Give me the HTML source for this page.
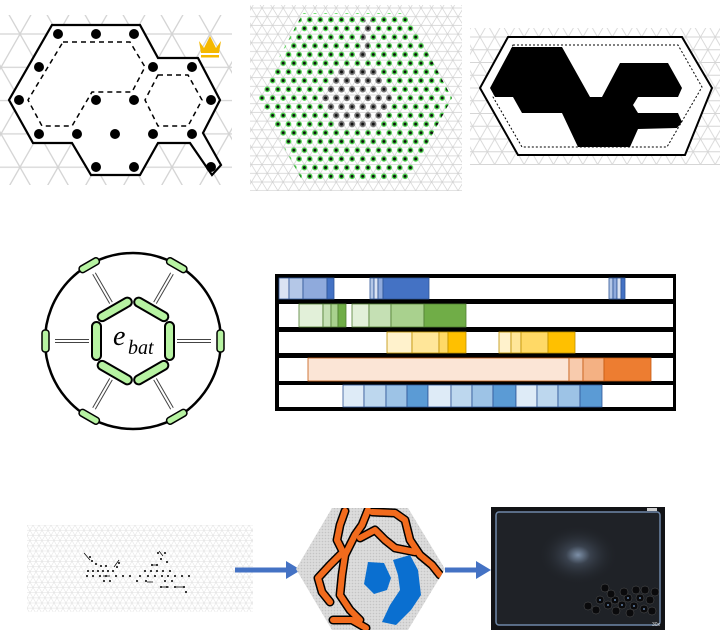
<!DOCTYPE html>
<html><head><meta charset="utf-8"><style>
html,body{margin:0;padding:0;background:#fff;width:720px;height:638px;overflow:hidden}
svg{display:block}
</style></head><body>
<svg width="720" height="638" viewBox="0 0 720 638" xmlns="http://www.w3.org/2000/svg">
<defs>
<pattern id="g1" width="38" height="66.6" patternUnits="userSpaceOnUse" patternTransform="translate(20,34)">
<path d="M0,0H38M0,33.3H38M0,66.6H38M0,0L38,66.6M38,0L0,66.6" stroke="#d4d4d4" stroke-width="1.3" fill="none"/></pattern>
<pattern id="g2" width="10.6" height="17.4" patternUnits="userSpaceOnUse" patternTransform="translate(262,8)">
<path d="M0,0H10.6M0,8.7H10.6M0,17.4H10.6M0,0L10.6,17.4M10.6,0L0,17.4" stroke="#d0d0d0" stroke-width="0.7" fill="none"/></pattern>
<pattern id="g3" width="14.7" height="25.5" patternUnits="userSpaceOnUse" patternTransform="translate(480,37)">
<path d="M0,0H14.7M0,12.75H14.7M0,25.5H14.7M0,0L14.7,25.5M14.7,0L0,25.5" stroke="#d6d6d6" stroke-width="0.9" fill="none"/></pattern>
<pattern id="g4" width="6" height="10.4" patternUnits="userSpaceOnUse" patternTransform="translate(27,525)">
<path d="M0,0H6M0,5.2H6M0,10.4H6M0,0L6,10.4M6,0L0,10.4" stroke="#e0e0e0" stroke-width="0.5" fill="none"/></pattern>
<pattern id="dg" width="10.6" height="17.4" patternUnits="userSpaceOnUse" patternTransform="translate(262,98)">
<g id="gd"><circle cx="0" cy="0" r="2.8" fill="#4cd44c"/><circle cx="0" cy="0" r="1.5" fill="#111"/></g>
<use href="#gd" x="5.3" y="8.7"/><use href="#gd" x="10.6" y="0"/><use href="#gd" x="0" y="17.4"/><use href="#gd" x="10.6" y="17.4"/>
</pattern>
<pattern id="dk" width="10.6" height="17.4" patternUnits="userSpaceOnUse" patternTransform="translate(262,98)">
<g id="kd"><circle cx="0" cy="0" r="3.2" fill="#777"/><circle cx="0" cy="0" r="1.5" fill="#111"/></g>
<use href="#kd" x="5.3" y="8.7"/><use href="#kd" x="10.6" y="0"/><use href="#kd" x="0" y="17.4"/><use href="#kd" x="10.6" y="17.4"/>
</pattern>
<pattern id="hx" width="3" height="3" patternUnits="userSpaceOnUse">
<rect width="3" height="3" fill="#dcdcdc"/><circle cx="1.5" cy="1.5" r="0.8" fill="#c4c4c4"/></pattern>
<clipPath id="hex2"><polygon points="303,13 407,13 452,98 407,182 303,182 257,98"/></clipPath>
<clipPath id="hexo"><polygon points="332,508 408,508 445,569 408,630 332,630 296,569"/></clipPath>
<radialGradient id="spot" cx="0.5" cy="0.5" r="0.5"><stop offset="0" stop-color="#7d90a8"/><stop offset="0.3" stop-color="#3a424e"/><stop offset="1" stop-color="#1f2227" stop-opacity="0"/></radialGradient>
</defs>

<!-- Panel 1 -->
<rect x="0" y="15" width="232" height="170" fill="url(#g1)"/>
<path d="M52,25L140,25L158,58L198,58L220,100L203,133L221,165L212,175L190,143L158,143L140,175L91,175L72,143L33,143L9,100Z" fill="#fff" stroke="#000" stroke-width="2.2"/>
<g stroke="#000" stroke-width="1.5" stroke-dasharray="5,4" fill="none">
<path d="M63,42L130,42L145,67L132,92L92,92L72,126L42,126L28,100L63,42"/>
<path d="M158,75L188,75L202,100L188,126L158,126L145,100Z"/>
</g>
<g fill="#000">
<circle cx="58" cy="34" r="5"/><circle cx="96" cy="34" r="5"/><circle cx="134" cy="34" r="5"/>
<circle cx="39" cy="67" r="5"/><circle cx="153" cy="67" r="5"/><circle cx="192" cy="67" r="5"/>
<circle cx="19" cy="100" r="5"/><circle cx="96" cy="100" r="5"/><circle cx="134" cy="100" r="5"/><circle cx="211" cy="100" r="5"/>
<circle cx="39" cy="134" r="5"/><circle cx="77" cy="134" r="5"/><circle cx="115" cy="134" r="5"/><circle cx="153" cy="134" r="5"/><circle cx="192" cy="134" r="5"/>
<circle cx="96" cy="167" r="5"/><circle cx="134" cy="167" r="5"/><circle cx="211" cy="167" r="5"/>
</g>
<g fill="#f5b800"><path d="M199,41L204,48L210,36L216,48L221,41L219,53L201,53Z"/><rect x="201" y="55" width="18" height="2.5"/></g>

<!-- Panel 2 -->
<rect x="250" y="5" width="212" height="186" fill="url(#g2)"/>
<rect x="250" y="5" width="212" height="186" fill="url(#dg)" clip-path="url(#hex2)"/>
<clipPath id="gr"><polygon points="336,68 378,68 392,98 378,128 336,128 321,98"/><polygon points="364,20 372,20 368,58 358,60"/></clipPath>
<rect x="250" y="5" width="212" height="186" fill="#fff" clip-path="url(#gr)"/>
<rect x="250" y="5" width="212" height="186" fill="url(#g2)" clip-path="url(#gr)"/>
<rect x="250" y="5" width="212" height="186" fill="url(#dk)" clip-path="url(#gr)"/>

<!-- Panel 3 -->
<rect x="470" y="28" width="250" height="137" fill="url(#g3)"/>
<polygon points="508,37 682,37 712,88 685,155 518,155 480,88" fill="#fff" stroke="#000" stroke-width="2"/>
<polygon points="513,45 678,45 702,87 667,147 522,147 493,97" fill="none" stroke="#000" stroke-width="1" stroke-dasharray="2,2"/>
<polygon points="512,47 562,47 590,97 602,97 620,63 668,63 682,88 678,97 638,97 633,105 638,113 678,113 682,122 677,128 638,129 630,147 578,147 562,113 522,113 513,97 495,97 490,88" fill="#000"/>

<!-- Circle figure -->
<circle cx="133" cy="341" r="88" fill="#fff" stroke="#000" stroke-width="2.5"/>
<g transform="translate(133,341)">
<g stroke="#444" stroke-width="1" fill="none">
<g id="sp"><path d="M44,-1.5H78M44,1.5H78"/></g>
<use href="#sp" transform="rotate(60)"/><use href="#sp" transform="rotate(120)"/><use href="#sp" transform="rotate(180)"/><use href="#sp" transform="rotate(240)"/><use href="#sp" transform="rotate(300)"/>
</g>
<g fill="#b7f3a2" stroke="#000" stroke-width="2">
<g id="pl"><rect x="32" y="-19" width="9" height="38" rx="4.5"/></g>
<use href="#pl" transform="rotate(60)"/><use href="#pl" transform="rotate(120)"/><use href="#pl" transform="rotate(180)"/><use href="#pl" transform="rotate(240)"/><use href="#pl" transform="rotate(300)"/>
<g id="op"><rect x="84" y="-11" width="7" height="22" rx="3" stroke-width="1.5"/></g>
<use href="#op" transform="rotate(60)"/><use href="#op" transform="rotate(120)"/><use href="#op" transform="rotate(180)"/><use href="#op" transform="rotate(240)"/><use href="#op" transform="rotate(300)"/>
</g>
<text x="-20" y="4" font-family="Liberation Serif, serif" font-style="italic" font-size="28" fill="#000">e</text>
<text x="-5" y="13" font-family="Liberation Serif, serif" font-style="italic" font-size="20" fill="#000">bat</text>
</g>

<!-- Bars -->
<rect x="275" y="274" width="401" height="137" fill="#000"/>
<rect x="279" y="278" width="394" height="21" fill="#fff"/>
<rect x="279" y="304" width="394" height="23" fill="#fff"/>
<rect x="279" y="332" width="394" height="21" fill="#fff"/>
<rect x="279" y="358" width="394" height="23" fill="#fff"/>
<rect x="279" y="385" width="394" height="22" fill="#fff"/>
<g stroke="#2f5597" stroke-width="0.8">
<rect x="279" y="278" width="10" height="21" fill="#dae3f3"/><rect x="289" y="278" width="14" height="21" fill="#b4c7e7"/><rect x="303" y="278" width="24" height="21" fill="#8faadc"/><rect x="327" y="278" width="7" height="21" fill="#4472c4"/>
<rect x="370" y="278" width="4" height="21" fill="#b4c7e7"/><rect x="374" y="278" width="4" height="21" fill="#dae3f3"/><rect x="378" y="278" width="5" height="21" fill="#8faadc"/><rect x="383" y="278" width="46" height="21" fill="#4472c4"/>
<rect x="609" y="278" width="4" height="21" fill="#b4c7e7"/><rect x="613" y="278" width="4" height="21" fill="#8faadc"/><rect x="617" y="278" width="4" height="21" fill="#dae3f3"/><rect x="621" y="278" width="4" height="21" fill="#4472c4"/>
</g>
<g stroke="#507e32" stroke-width="0.8">
<rect x="299" y="304" width="24" height="23" fill="#e2f0d9"/><rect x="323" y="304" width="8" height="23" fill="#c5e0b4"/><rect x="331" y="304" width="7" height="23" fill="#a9d18e"/><rect x="338" y="304" width="8" height="23" fill="#70ad47"/>
<rect x="352" y="304" width="17" height="23" fill="#e2f0d9"/><rect x="369" y="304" width="22" height="23" fill="#c5e0b4"/><rect x="391" y="304" width="33" height="23" fill="#a9d18e"/><rect x="424" y="304" width="42" height="23" fill="#70ad47"/>
</g>
<g stroke="#bf9000" stroke-width="0.8">
<rect x="387" y="332" width="25" height="21" fill="#fff2cc"/><rect x="412" y="332" width="27" height="21" fill="#ffe699"/><rect x="439" y="332" width="9" height="21" fill="#ffd966"/><rect x="448" y="332" width="18" height="21" fill="#ffc000"/>
<rect x="499" y="332" width="12" height="21" fill="#fff2cc"/><rect x="511" y="332" width="10" height="21" fill="#ffe699"/><rect x="521" y="332" width="27" height="21" fill="#ffd966"/><rect x="548" y="332" width="27" height="21" fill="#ffc000"/>
</g>
<g stroke="#c55a11" stroke-width="0.8">
<rect x="308" y="358" width="261" height="23" fill="#fbe5d6"/><rect x="569" y="358" width="14" height="23" fill="#f8cbad"/><rect x="583" y="358" width="21" height="23" fill="#f4b183"/><rect x="604" y="358" width="47" height="23" fill="#ed7d31"/>
</g>
<g stroke="#2f5597" stroke-width="0.8">
<rect x="343" y="385" width="21" height="22" fill="#deebf7"/><rect x="364" y="385" width="22" height="22" fill="#bdd7ee"/><rect x="386" y="385" width="21" height="22" fill="#9dc3e6"/><rect x="407" y="385" width="21" height="22" fill="#5b9bd5"/>
<rect x="428" y="385" width="23" height="22" fill="#deebf7"/><rect x="451" y="385" width="21" height="22" fill="#bdd7ee"/><rect x="472" y="385" width="21" height="22" fill="#9dc3e6"/><rect x="493" y="385" width="23" height="22" fill="#5b9bd5"/>
<rect x="516" y="385" width="21" height="22" fill="#deebf7"/><rect x="537" y="385" width="21" height="22" fill="#bdd7ee"/><rect x="558" y="385" width="22" height="22" fill="#9dc3e6"/><rect x="580" y="385" width="22" height="22" fill="#5b9bd5"/>
</g>

<!-- Bottom left -->
<rect x="27" y="525" width="226" height="87" fill="url(#g4)"/>
<g fill="#000">
<circle cx="90" cy="557" r="1"/><circle cx="92" cy="561" r="1"/><circle cx="96" cy="564" r="1"/><circle cx="101" cy="566" r="1"/><circle cx="106" cy="566" r="1"/><circle cx="119" cy="563" r="1"/><circle cx="117" cy="567" r="1"/>
<circle cx="88" cy="571" r="1"/><circle cx="93" cy="571" r="1"/><circle cx="98" cy="571" r="1"/><circle cx="103" cy="571" r="1"/><circle cx="108" cy="571" r="1"/><circle cx="113" cy="571" r="1"/>
<circle cx="87" cy="576" r="1"/><circle cx="93" cy="576" r="1"/><circle cx="100" cy="576" r="1"/><circle cx="106" cy="576" r="1"/><circle cx="116" cy="576" r="1"/><circle cx="123" cy="576" r="1"/><circle cx="130" cy="576" r="1"/>
<circle cx="104" cy="581" r="1"/><circle cx="110" cy="581" r="1"/><circle cx="137" cy="581" r="1"/><circle cx="146" cy="581" r="1"/>
<circle cx="158" cy="553" r="1"/><circle cx="165" cy="553" r="1"/><circle cx="161" cy="559" r="1"/><circle cx="167" cy="562" r="1"/><circle cx="152" cy="565" r="1"/><circle cx="157" cy="565" r="1"/>
<circle cx="145" cy="571" r="1"/><circle cx="151" cy="571" r="1"/><circle cx="157" cy="571" r="1"/><circle cx="163" cy="571" r="1"/><circle cx="170" cy="571" r="1"/>
<circle cx="140" cy="576" r="1"/><circle cx="148" cy="576" r="1"/><circle cx="155" cy="576" r="1"/><circle cx="162" cy="576" r="1"/><circle cx="168" cy="576" r="1"/><circle cx="175" cy="576" r="1"/><circle cx="182" cy="576" r="1"/><circle cx="189" cy="576" r="1"/>
<circle cx="165" cy="581" r="1"/><circle cx="172" cy="581" r="1"/><circle cx="161" cy="587" r="1"/><circle cx="167" cy="587" r="1"/><circle cx="175" cy="587" r="1"/><circle cx="184" cy="587" r="1"/><circle cx="186" cy="592" r="1"/>
</g>
<g stroke="#000" stroke-width="0.7"><path d="M84,553L90,560M119,560L114,567M103,576L110,576M147,582L153,582M151,565L158,565M159,551L163,556M161,587L169,587M176,587L184,587"/></g>
<path d="M235,570H287" stroke="#4472c4" stroke-width="5"/><path d="M286,561L301,570L286,579Z" fill="#4472c4"/>

<!-- Orange hex -->
<rect x="290" y="505" width="160" height="130" fill="url(#hx)" clip-path="url(#hexo)"/>
<g clip-path="url(#hexo)" fill="none" stroke-linejoin="round" stroke-linecap="round">
<g stroke="#000" stroke-width="9">
<path d="M345,511L340,525L337,540L343,552L330,565L318,578L322,592L330,602"/>
<path d="M368,510L362,525L355,535L345,555L342,575L340,595L350,610L360,620"/>
<path d="M333,620L352,620L366,628"/>
<path d="M372,512L395,513L405,520L410,540L420,555L432,565L440,575"/>
<path d="M360,538L375,530L385,540L395,548L415,552"/>
</g>
<g stroke="#f26b1d" stroke-width="6">
<path d="M345,511L340,525L337,540L343,552L330,565L318,578L322,592L330,602"/>
<path d="M368,510L362,525L355,535L345,555L342,575L340,595L350,610L360,620"/>
<path d="M333,620L352,620L366,628"/>
<path d="M372,512L395,513L405,520L410,540L420,555L432,565L440,575"/>
<path d="M360,538L375,530L385,540L395,548L415,552"/>
</g>
</g>
<g fill="#0a6fd0">
<path d="M368,562L384,563L391,578L387,590L374,594L364,584Z"/>
<path d="M393,560L410,555L418,570L421,595L411,610L396,625L382,622L390,605L400,590L398,575Z"/>
</g>
<path d="M445,570H477" stroke="#4472c4" stroke-width="5"/><path d="M476,561L491,570L476,579Z" fill="#4472c4"/>

<!-- Photo -->
<rect x="491" y="507" width="174" height="123" fill="#121316"/>
<rect x="496" y="512" width="164" height="113" rx="3" fill="#1f2227" stroke="#6f88a8" stroke-width="1.5"/>
<ellipse cx="578" cy="555" rx="40" ry="30" fill="url(#spot)"/>
<g fill="#0a0a0c" stroke="#555" stroke-width="0.5">
<circle cx="605" cy="588" r="4"/><circle cx="600" cy="600" r="4"/><circle cx="608" cy="605" r="4"/><circle cx="596" cy="610" r="4"/><circle cx="615" cy="600" r="4"/><circle cx="622" cy="605" r="4"/><circle cx="616" cy="611" r="4"/><circle cx="628" cy="598" r="4"/><circle cx="634" cy="606" r="4"/><circle cx="630" cy="613" r="4"/><circle cx="640" cy="598" r="4"/><circle cx="645" cy="590" r="4"/><circle cx="650" cy="600" r="4"/><circle cx="644" cy="609" r="4"/><circle cx="652" cy="611" r="4"/><circle cx="636" cy="590" r="4"/><circle cx="588" cy="606" r="4"/><circle cx="624" cy="592" r="4"/><circle cx="611" cy="594" r="4"/><circle cx="655" cy="592" r="4"/>
</g>
<g fill="#7aa0d0"><circle cx="600" cy="600" r="0.9"/><circle cx="615" cy="600" r="0.9"/><circle cx="628" cy="598" r="0.9"/><circle cx="640" cy="598" r="0.9"/><circle cx="622" cy="605" r="0.9"/><circle cx="634" cy="606" r="0.9"/><circle cx="644" cy="609" r="0.9"/><circle cx="608" cy="605" r="0.9"/></g>
<text x="652" y="626" font-family="Liberation Sans, sans-serif" font-size="5" fill="#ddd">30x</text>
<rect x="647" y="508" width="10" height="3" fill="#ccc"/>
</svg>
</body></html>
